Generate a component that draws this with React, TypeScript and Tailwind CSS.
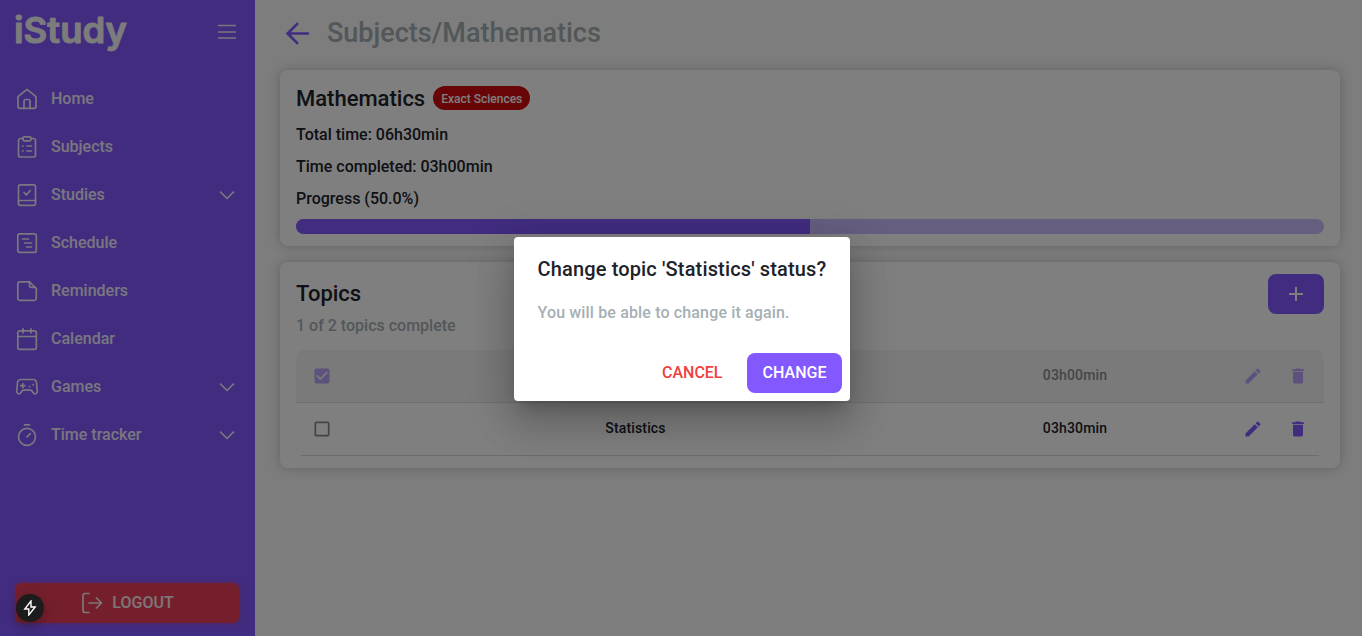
import React from "react";
import { MdAdd, MdCheckBox, MdCheckBoxOutlineBlank, MdDelete, MdEdit } from "react-icons/md";

function Icon({ children, className = "size-6" }: { children: React.ReactNode; className?: string }) {
  return (
    <svg viewBox="0 0 24 24" fill="none" stroke="currentColor" strokeWidth="1.7" strokeLinecap="round" strokeLinejoin="round" className={className}>
      {children}
    </svg>
  );
}

const icons = {
  home: (
    <>
      <path d="M3 9.600 12 2.300l9 7.300v9.700a2 2 0 0 1-2 2H5a2 2 0 0 1-2-2Z" />
      <path d="M9 21.300v-6.800a2 2 0 0 1 2-2h2a2 2 0 0 1 2 2v6.800" />
    </>
  ),
  subjects: (
    <>
      <path d="M8 3.500H5.500a2 2 0 0 0-2 2V20a2 2 0 0 0 2 2h13a2 2 0 0 0 2-2V5.500a2 2 0 0 0-2-2H16" />
      <rect x="8" y="1.800" width="8" height="4" rx="1.200" />
      <path d="M12 11h4.500M12 16h4.500M7.600 11h.4M7.600 16h.4" />
    </>
  ),
  studies: (
    <>
      <rect x="3.500" y="1.800" width="17" height="20.500" rx="1.800" />
      <path d="M3.500 17.500h17M9 9.500l2.300 2.300 4-4.300" />
    </>
  ),
  schedule: (
    <>
      <rect x="2.800" y="2.800" width="18.500" height="18.500" rx="1.800" />
      <path d="M7.500 8h6M9.500 12h7M11.500 16h5" />
    </>
  ),
  reminders: (
    <>
      <path d="M14.500 2.800H4.600A1.800 1.800 0 0 0 2.800 4.600v14.900a1.800 1.800 0 0 0 1.800 1.800h14.900a1.800 1.800 0 0 0 1.800-1.800V9.500Z" />
      <path d="M14.500 2.800v3.800a1.800 1.800 0 0 0 1.800 1.800h4" />
    </>
  ),
  calendar: (
    <>
      <rect x="2.800" y="3.800" width="18.500" height="18.500" rx="1.800" />
      <path d="M2.800 9.500h18.500M8 1.800v4M16 1.800v4" />
    </>
  ),
  games: (
    <>
      <path d="M6 4.500h12a3.500 3.500 0 0 1 3.500 3l.8 8.800c.2 2.400-2.800 3.500-4.100 1.500L16.700 15.500c-1.500-.7-2.500-.7-4.700-.7s-3.200 0-4.700.7l-1.500 2.300c-1.300 2-4.300.9-4.100-1.500L2.500 7.500A3.500 3.500 0 0 1 6 4.500Z" />
      <path d="M5.700 10.700h4.200M7.800 8.600v4.200M14.500 11.700h.2M18 9.700h.2" />
    </>
  ),
  timer: (
    <>
      <circle cx="12" cy="13.800" r="8.500" />
      <path d="M9.500 1.800h5M12 13.800l3.200-3.200" />
    </>
  ),
};

const nav: { label: string; icon: keyof typeof icons; open?: boolean }[] = [
  { label: "Home", icon: "home" },
  { label: "Subjects", icon: "subjects" },
  { label: "Studies", icon: "studies", open: true },
  { label: "Schedule", icon: "schedule" },
  { label: "Reminders", icon: "reminders" },
  { label: "Calendar", icon: "calendar" },
  { label: "Games", icon: "games", open: true },
  { label: "Time tracker", icon: "timer", open: true },
];

function Sidebar() {
  return (
    <aside className="flex w-[255px] shrink-0 flex-col bg-[#8358ff] text-white/90">
      <div className="flex h-16 items-center justify-between pr-4 pl-3">
        <svg viewBox="0 0 120 56" className="h-14 w-[120px] text-[#f8f8f8]" role="img" aria-label="iStudy">
          <text x="2" y="38.6" textLength="113" lengthAdjust="spacingAndGlyphs" fill="currentColor" stroke="currentColor" strokeWidth="1" strokeLinejoin="round" className="font-['Inter',sans-serif] text-[36px] font-semibold">
            iStudy
          </text>
        </svg>
        <Icon>
          <path d="M3.750 5.500h16.500M3.750 12h16.500M3.750 18h16.500" />
        </Icon>
      </div>
      <nav className="mt-[11px] flex flex-col">
        {nav.map((item) => (
          <a key={item.label} className="flex h-12 items-center pr-4 pl-[15px]">
            <Icon>{icons[item.icon]}</Icon>
            <span className="ml-3 flex-1 text-base font-medium">{item.label}</span>
            {item.open && (
              <Icon>
                <path d="m5.500 9 6.500 6.500L18.500 9" />
              </Icon>
            )}
          </a>
        ))}
      </nav>
      <button className="mr-4 mb-[13px] ml-[15px] mt-auto flex h-10 items-center justify-center gap-2 rounded-md bg-[#eb3e5b] shadow-[0_0_5px_#eb3e5b80]">
        <Icon>
          <path d="M9 2.500H5a2 2 0 0 0-2 2v15a2 2 0 0 0 2 2h4M9 12h12.500M16.500 7l5 5-5 5" />
        </Icon>
        <span className="text-base font-medium">LOGOUT</span>
      </button>
    </aside>
  );
}

const topics = [
  { name: "Geometry", time: "03h00min", done: true },
  { name: "Statistics", time: "03h30min", done: false },
];

function TopicRow({ name, time, done }: { name: string; time: string; done: boolean }) {
  const Check = done ? MdCheckBox : MdCheckBoxOutlineBlank;
  return (
    <div
      className={
        done
          ? "flex h-[53px] items-center rounded-t-lg border-b border-[#e0e0e0] bg-[#f5f5f5]"
          : "mx-[5px] flex h-[53px] items-center border-b border-[#d8d8d8]"
      }
    >
      <div className={done ? "flex w-full items-center opacity-50" : "-mx-[5px] flex flex-1 items-center"}>
        <div className="flex w-[52px] justify-center">
          <Check className={done ? "size-5 text-[#8358ff]" : "size-5 text-[#888]"} />
        </div>
        <div className="w-[575px] pb-0.5 text-center text-sm font-medium tracking-[0.15px]">{name}</div>
        <div className="w-[304px] pb-0.5 text-center text-sm font-medium tracking-[0.15px]">{time}</div>
        <div className="flex flex-1 justify-end gap-[25px] pr-4 text-[#8358ff]">
          <MdEdit className="size-5" />
          <MdDelete className="size-5" />
        </div>
      </div>
    </div>
  );
}

function Content() {
  return (
    <main className="flex flex-1 flex-col pr-[22px] pl-[25px]">
      <header className="flex h-[70px] items-center pb-1">
        <svg viewBox="0 0 24 24" fill="none" stroke="currentColor" strokeWidth="2.600" className="ml-[5px] size-[25px] text-[#8358ff]">
          <path d="M12.500 2 2.500 12l10 10M2.500 12h20.500" />
        </svg>
        <h1 className="ml-[17px] text-[27px] leading-8 font-medium text-[#a5afb4]">Subjects/Mathematics</h1>
      </header>
      <section className="flex h-44 flex-col rounded-lg bg-white px-4 pt-3 shadow-[0_0_12px_#00000038]">
        <div className="flex h-8 items-center gap-2">
          <h2 className="text-[22px] font-medium">Mathematics</h2>
          <span className="flex h-6 items-center rounded-full bg-[#d00c0e] px-2 pt-0.5 text-xs font-medium text-white">Exact Sciences</span>
        </div>
        <p className="mt-[5px] h-8 leading-8 font-medium">Total time: 06h30min</p>
        <p className="h-8 leading-8 font-medium">Time completed: 03h00min</p>
        <p className="h-8 leading-8 font-medium">Progress (50.0%)</p>
        <div className="mt-1 flex h-[15px] overflow-hidden rounded-full bg-[#cbbcff]">
          <div className="w-1/2 bg-[#8358ff]" />
        </div>
      </section>
      <section className="mt-4 flex h-[206px] flex-col rounded-lg bg-white px-4 pt-3 shadow-[0_0_12px_#00000038]">
        <div className="flex h-[76px] justify-between">
          <div>
            <h2 className="mt-0.5 text-[22px] leading-9 font-medium">Topics</h2>
            <p className="leading-[27px] font-medium text-[#a5afb4]">1 of 2 topics complete</p>
          </div>
          <button className="flex h-10 w-14 items-center justify-center rounded-lg bg-[#8358ff] text-white">
            <MdAdd className="size-6" />
          </button>
        </div>
        {topics.map((t) => (
          <TopicRow key={t.name} {...t} />
        ))}
      </section>
    </main>
  );
}

export default function App() {
  return (
    <div className="relative flex h-[636px] w-[1362px] overflow-hidden bg-[#fafafa] font-['Roboto',sans-serif] text-[#212229]">
      <Sidebar />
      <Content />
      <div className="absolute inset-0 flex items-center justify-center bg-black/50 pt-0.5 pl-0.5">
        <div role="dialog" className="flex h-[164px] w-[336px] flex-col rounded bg-white shadow-[0_11px_15px_-7px_rgba(0,0,0,0.2),0_24px_38px_3px_rgba(0,0,0,0.14),0_9px_46px_8px_rgba(0,0,0,0.12)]">
          <h2 className="pt-4 pl-[23.5px] text-xl leading-8 font-medium tracking-[0.15px] whitespace-nowrap">Change topic 'Statistics' status?</h2>
          <p className="pt-4 pl-[23.5px] leading-6 font-medium tracking-[0.15px] text-[#a5afb4]">You will be able to change it again.</p>
          <div className="mt-auto flex justify-end gap-2 p-2 font-medium">
            <button className="h-10 pr-[16.5px] pl-4 text-[#f04040]">CANCEL</button>
            <button className="h-10 w-[95px] rounded-lg bg-[#8358ff] text-white">CHANGE</button>
          </div>
        </div>
      </div>
      <div className="absolute bottom-3.5 left-4 flex size-7 items-center justify-center rounded-full bg-[#1c1c1c] text-white shadow-[0_4px_12px_#00000040]">
        <svg viewBox="0 0 16 16" fill="none" stroke="currentColor" strokeWidth="1.400" className="size-4">
          <path d="M9 1 2.800 9h4v6L13.200 7H9Z" />
        </svg>
      </div>
    </div>
  );
}
